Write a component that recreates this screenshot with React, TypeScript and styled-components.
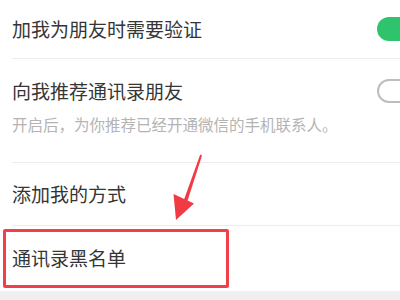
import React from 'react';
import styled, { createGlobalStyle } from 'styled-components';

const GlobalStyle = createGlobalStyle`
  html, body {
    margin: 0;
    padding: 0;
    background: #ffffff;
  }
  body {
    font-family: "Noto Sans CJK SC", "Noto Sans", sans-serif;
    -webkit-font-smoothing: antialiased;
  }
`;

const Screen = styled.div`
  position: relative;
  width: 400px;
  height: 300px;
  overflow: hidden;
  background: #efefef;
`;

const Group = styled.div`
  background: #ffffff;
  padding-left: 12px;
`;

const Row = styled.div<{ $height: number; $divider?: boolean }>`
  display: flex;
  align-items: center;
  justify-content: space-between;
  height: ${(p) => p.$height}px;
  border-bottom: ${(p) => (p.$divider ? '1px solid #ececec' : 'none')};
  box-sizing: border-box;
`;

const Block = styled.div<{ $divider?: boolean }>`
  display: flex;
  flex-direction: column;
  padding-top: 9px;
  border-bottom: ${(p) => (p.$divider ? '1px solid #ececec' : 'none')};
  height: 104px;
  box-sizing: border-box;
`;

const Title = styled.span`
  font-size: 19px;
  line-height: 1;
  color: #353535;
  margin-top: -2px;
`;

const Hint = styled.div`
  font-size: 15.5px;
  line-height: 1;
  color: #b4b4b4;
  margin-top: 3px;
`;

const Toggle = styled.div<{ $on?: boolean }>`
  width: 48px;
  height: 24px;
  margin-right: -25px;
  border-radius: 12px;
  box-sizing: border-box;
  background: ${(p) => (p.$on ? '#2ec36c' : '#ffffff')};
  border: ${(p) => (p.$on ? 'none' : '2px solid #bdbdbd')};
  flex-shrink: 0;
`;

const Highlight = styled.div`
  position: absolute;
  left: 3px;
  top: 229px;
  width: 226px;
  height: 59px;
  border: 3.5px solid #f2404b;
  border-radius: 2px;
  box-sizing: border-box;
`;

const Arrow = styled.svg`
  position: absolute;
  left: 0;
  top: 0;
`;

export default function App() {
  return (
    <Screen>
      <GlobalStyle />
      <Group>
        <Row $height={59} $divider>
          <Title>加我为朋友时需要验证</Title>
          <Toggle $on />
        </Row>
        <Block $divider>
          <Row $height={46}>
            <Title>向我推荐通讯录朋友</Title>
            <Toggle />
          </Row>
          <Hint>开启后，为你推荐已经开通微信的手机联系人。</Hint>
        </Block>
        <Row $height={63} $divider>
          <Title>添加我的方式</Title>
        </Row>
        <Row $height={65}>
          <Title>通讯录黑名单</Title>
        </Row>
      </Group>
      <Highlight />
      <Arrow width="400" height="300" viewBox="0 0 400 300">
        <path d="M200.2 154.5 L202 155.5 L186.5 204 L183 202.5 Z" fill="#f03a44" />
        <path d="M176 220 L173.5 194 L194 203.5 Z" fill="#f03a44" />
      </Arrow>
    </Screen>
  );
}
